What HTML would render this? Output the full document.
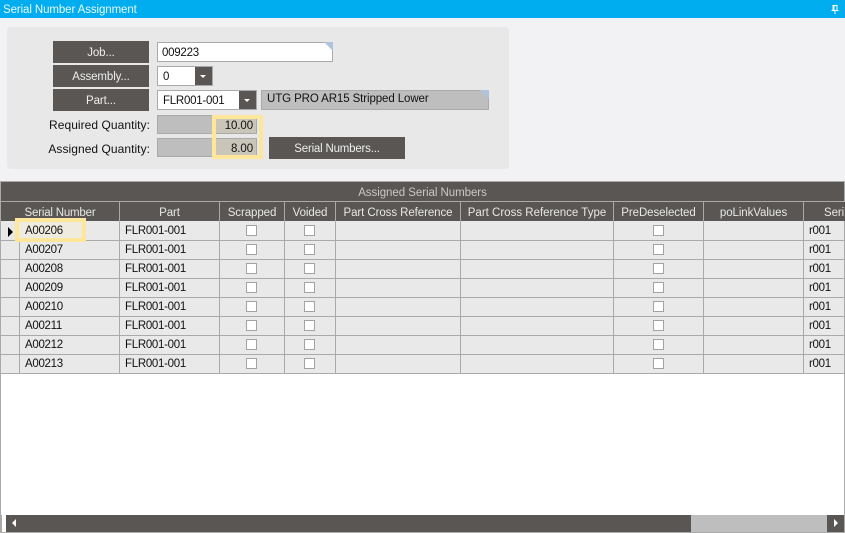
<!DOCTYPE html>
<html><head><meta charset="utf-8">
<style>
html,body{margin:0;padding:0;width:845px;height:533px;overflow:hidden;background:#f2f2f4;font-family:"Liberation Sans",sans-serif;font-size:11.5px;color:#111}
div{position:absolute;box-sizing:border-box;white-space:nowrap}
.btn{background:#595653;color:#eee;text-align:center;left:53px;width:96px;height:22px;line-height:25px;letter-spacing:-.1px}
.inp{background:#fff;border:1px solid #a9a9a9;line-height:21px;padding-left:4px;height:20px;letter-spacing:-.25px}
.dd{background:#595653;width:17px;height:18px;top:0}
.dd:after{content:"";position:absolute;left:5px;top:8px;border-left:3px solid transparent;border-right:3px solid transparent;border-top:3px solid #fff}
.ro{background:#bebebe;border:1px solid #aaa;height:20px}
.lab{text-align:right;left:7px;width:143px;font-size:12px;letter-spacing:.05px}
.ylw{background:#c9c5b9;border:1px solid #aaa;border-left:0;text-align:right;padding-right:3px;line-height:20px;left:216px;width:41px;height:19px;letter-spacing:-.1px}
.h{background:#595653;color:#e8e8e8;top:202px;height:19px;line-height:23px;text-align:center;border-right:1px solid #aaa;letter-spacing:-.08px;overflow:hidden}
.hl{background:#aaa;height:1px;left:1px;width:843px}
.vl{background:#aaa;width:1px;top:221px;height:152px}
.c{line-height:21px;letter-spacing:-.3px}
.cb{width:11px;height:11px;background:#fff;border:1px solid #a3a3a3}
.tri{width:0;height:0;border-top:9px solid #aec3de;border-left:9px solid transparent}
</style></head><body>
<div style="left:0;top:0;width:845px;height:18px;background:#00aeef;color:#e8f7fd;line-height:20px;padding-left:3px;letter-spacing:-.1px;overflow:hidden">Serial Number Assignment</div>
<svg style="position:absolute;left:831px;top:5px" width="8" height="9" viewBox="0 0 8 9"><path d="M1.500 0.500H6.500M2 0.500V5M6 0.500V5M0.500 5.500H7.500M4 5.500V9M3 1V5" stroke="#fff" fill="none" stroke-width="1"/></svg>

<div style="left:7px;top:27px;width:502px;height:142px;background:#e8e8e8;border-radius:4px"></div>
<div class="btn" style="top:41px">Job...</div>
<div class="btn" style="top:65px">Assembly...</div>
<div class="btn" style="top:89px">Part...</div>

<div class="inp" style="left:157px;top:42px;width:176px">009223</div>
<div class="tri" style="left:324px;top:42px"></div>
<div class="inp" style="left:157px;top:66px;width:56px;padding-left:5px">0<div class="dd" style="left:37px"></div></div>
<div class="inp" style="left:157px;top:90px;width:100px;padding-left:5px">FLR001-001<div class="dd" style="left:81px"></div></div>
<div class="ro" style="left:261px;top:90px;width:228px;line-height:17px;padding-left:5px;letter-spacing:-.1px">UTG PRO AR15 Stripped Lower</div>
<div class="tri" style="left:480px;top:90px"></div>

<div class="lab" style="top:118px">Required Quantity:</div>
<div class="lab" style="top:142px">Assigned Quantity:</div>
<div class="ro" style="left:157px;top:115px;width:60px;height:19px"></div>
<div class="ro" style="left:157px;top:138px;width:60px;height:19px"></div>
<div class="ylw" style="top:115px">10.00</div>
<div class="ylw" style="top:138px">8.00</div>
<div style="left:212px;top:115px;width:51px;height:44px;border:4px solid #fee79b"></div>
<div class="btn" style="left:269px;top:137px;width:136px;letter-spacing:-.2px">Serial Numbers...</div>

<div style="left:0;top:181px;width:845px;height:352px;background:#fff;border:1px solid #aaa"></div>
<div style="left:1px;top:182px;width:843px;height:19px;background:#595653;color:#c9c9c9;text-align:center;line-height:23px;letter-spacing:-.05px;overflow:hidden">Assigned Serial Numbers</div>
<div style="left:1px;top:221px;width:843px;height:152px;background:#e9e9e9"></div>
<div style="left:1px;top:201px;width:843px;height:1px;background:#aaa"></div>

<div class="h" style="left:1px;width:119px;letter-spacing:-.2px">Serial Number</div>
<div class="h" style="left:120px;width:100px">Part</div>
<div class="h" style="left:220px;width:65px">Scrapped</div>
<div class="h" style="left:285px;width:51px">Voided</div>
<div class="h" style="left:336px;width:125px">Part Cross Reference</div>
<div class="h" style="left:461px;width:153px;letter-spacing:0">Part Cross Reference Type</div>
<div class="h" style="left:614px;width:90px">PreDeselected</div>
<div class="h" style="left:704px;width:100px">poLinkValues</div>
<div class="h" style="left:804px;width:41px;border:0;padding-left:20px;text-align:left">Seri</div>

<div class="vl" style="left:19px"></div>
<div class="vl" style="left:119px"></div>
<div class="vl" style="left:219px"></div>
<div class="vl" style="left:284px"></div>
<div class="vl" style="left:335px"></div>
<div class="vl" style="left:460px"></div>
<div class="vl" style="left:613px"></div>
<div class="vl" style="left:703px"></div>
<div class="vl" style="left:803px"></div>

<div class="hl" style="top:240px"></div>
<div class="hl" style="top:259px"></div>
<div class="hl" style="top:278px"></div>
<div class="hl" style="top:297px"></div>
<div class="hl" style="top:316px"></div>
<div class="hl" style="top:335px"></div>
<div class="hl" style="top:354px"></div>
<div class="hl" style="top:373px"></div>

<div style="left:8px;top:227px;width:0;height:0;border-left:5px solid #000;border-top:5px solid transparent;border-bottom:5px solid transparent"></div>
<div style="left:15px;top:218px;width:71px;height:24px;background:#efebdf;border:4px solid #fee79b"></div>

<div class="c" style="left:25px;top:221px">A00206</div><div class="c" style="left:125px;top:221px">FLR001-001</div><div class="c" style="left:809px;top:221px">r001</div>
<div class="c" style="left:25px;top:240px">A00207</div><div class="c" style="left:125px;top:240px">FLR001-001</div><div class="c" style="left:809px;top:240px">r001</div>
<div class="c" style="left:25px;top:259px">A00208</div><div class="c" style="left:125px;top:259px">FLR001-001</div><div class="c" style="left:809px;top:259px">r001</div>
<div class="c" style="left:25px;top:278px">A00209</div><div class="c" style="left:125px;top:278px">FLR001-001</div><div class="c" style="left:809px;top:278px">r001</div>
<div class="c" style="left:25px;top:297px">A00210</div><div class="c" style="left:125px;top:297px">FLR001-001</div><div class="c" style="left:809px;top:297px">r001</div>
<div class="c" style="left:25px;top:316px">A00211</div><div class="c" style="left:125px;top:316px">FLR001-001</div><div class="c" style="left:809px;top:316px">r001</div>
<div class="c" style="left:25px;top:335px">A00212</div><div class="c" style="left:125px;top:335px">FLR001-001</div><div class="c" style="left:809px;top:335px">r001</div>
<div class="c" style="left:25px;top:354px">A00213</div><div class="c" style="left:125px;top:354px">FLR001-001</div><div class="c" style="left:809px;top:354px">r001</div>

<div class="cb" style="left:246px;top:225px"></div><div class="cb" style="left:304px;top:225px"></div><div class="cb" style="left:653px;top:225px"></div>
<div class="cb" style="left:246px;top:244px"></div><div class="cb" style="left:304px;top:244px"></div><div class="cb" style="left:653px;top:244px"></div>
<div class="cb" style="left:246px;top:263px"></div><div class="cb" style="left:304px;top:263px"></div><div class="cb" style="left:653px;top:263px"></div>
<div class="cb" style="left:246px;top:282px"></div><div class="cb" style="left:304px;top:282px"></div><div class="cb" style="left:653px;top:282px"></div>
<div class="cb" style="left:246px;top:301px"></div><div class="cb" style="left:304px;top:301px"></div><div class="cb" style="left:653px;top:301px"></div>
<div class="cb" style="left:246px;top:320px"></div><div class="cb" style="left:304px;top:320px"></div><div class="cb" style="left:653px;top:320px"></div>
<div class="cb" style="left:246px;top:339px"></div><div class="cb" style="left:304px;top:339px"></div><div class="cb" style="left:653px;top:339px"></div>
<div class="cb" style="left:246px;top:358px"></div><div class="cb" style="left:304px;top:358px"></div><div class="cb" style="left:653px;top:358px"></div>

<div style="left:6px;top:515px;width:685px;height:17px;background:#595653"></div>
<div style="left:691px;top:515px;width:136px;height:17px;background:#bebebe"></div>
<div style="left:827px;top:515px;width:17px;height:17px;background:#595653"></div>
<div style="left:1px;top:515px;width:1px;height:17px;background:#aaa"></div>
<div style="left:12px;top:519px;width:0;height:0;border-right:4px solid #fff;border-top:4px solid transparent;border-bottom:4px solid transparent"></div>
<div style="left:834px;top:519px;width:0;height:0;border-left:4px solid #fff;border-top:4px solid transparent;border-bottom:4px solid transparent"></div>
</body></html>
